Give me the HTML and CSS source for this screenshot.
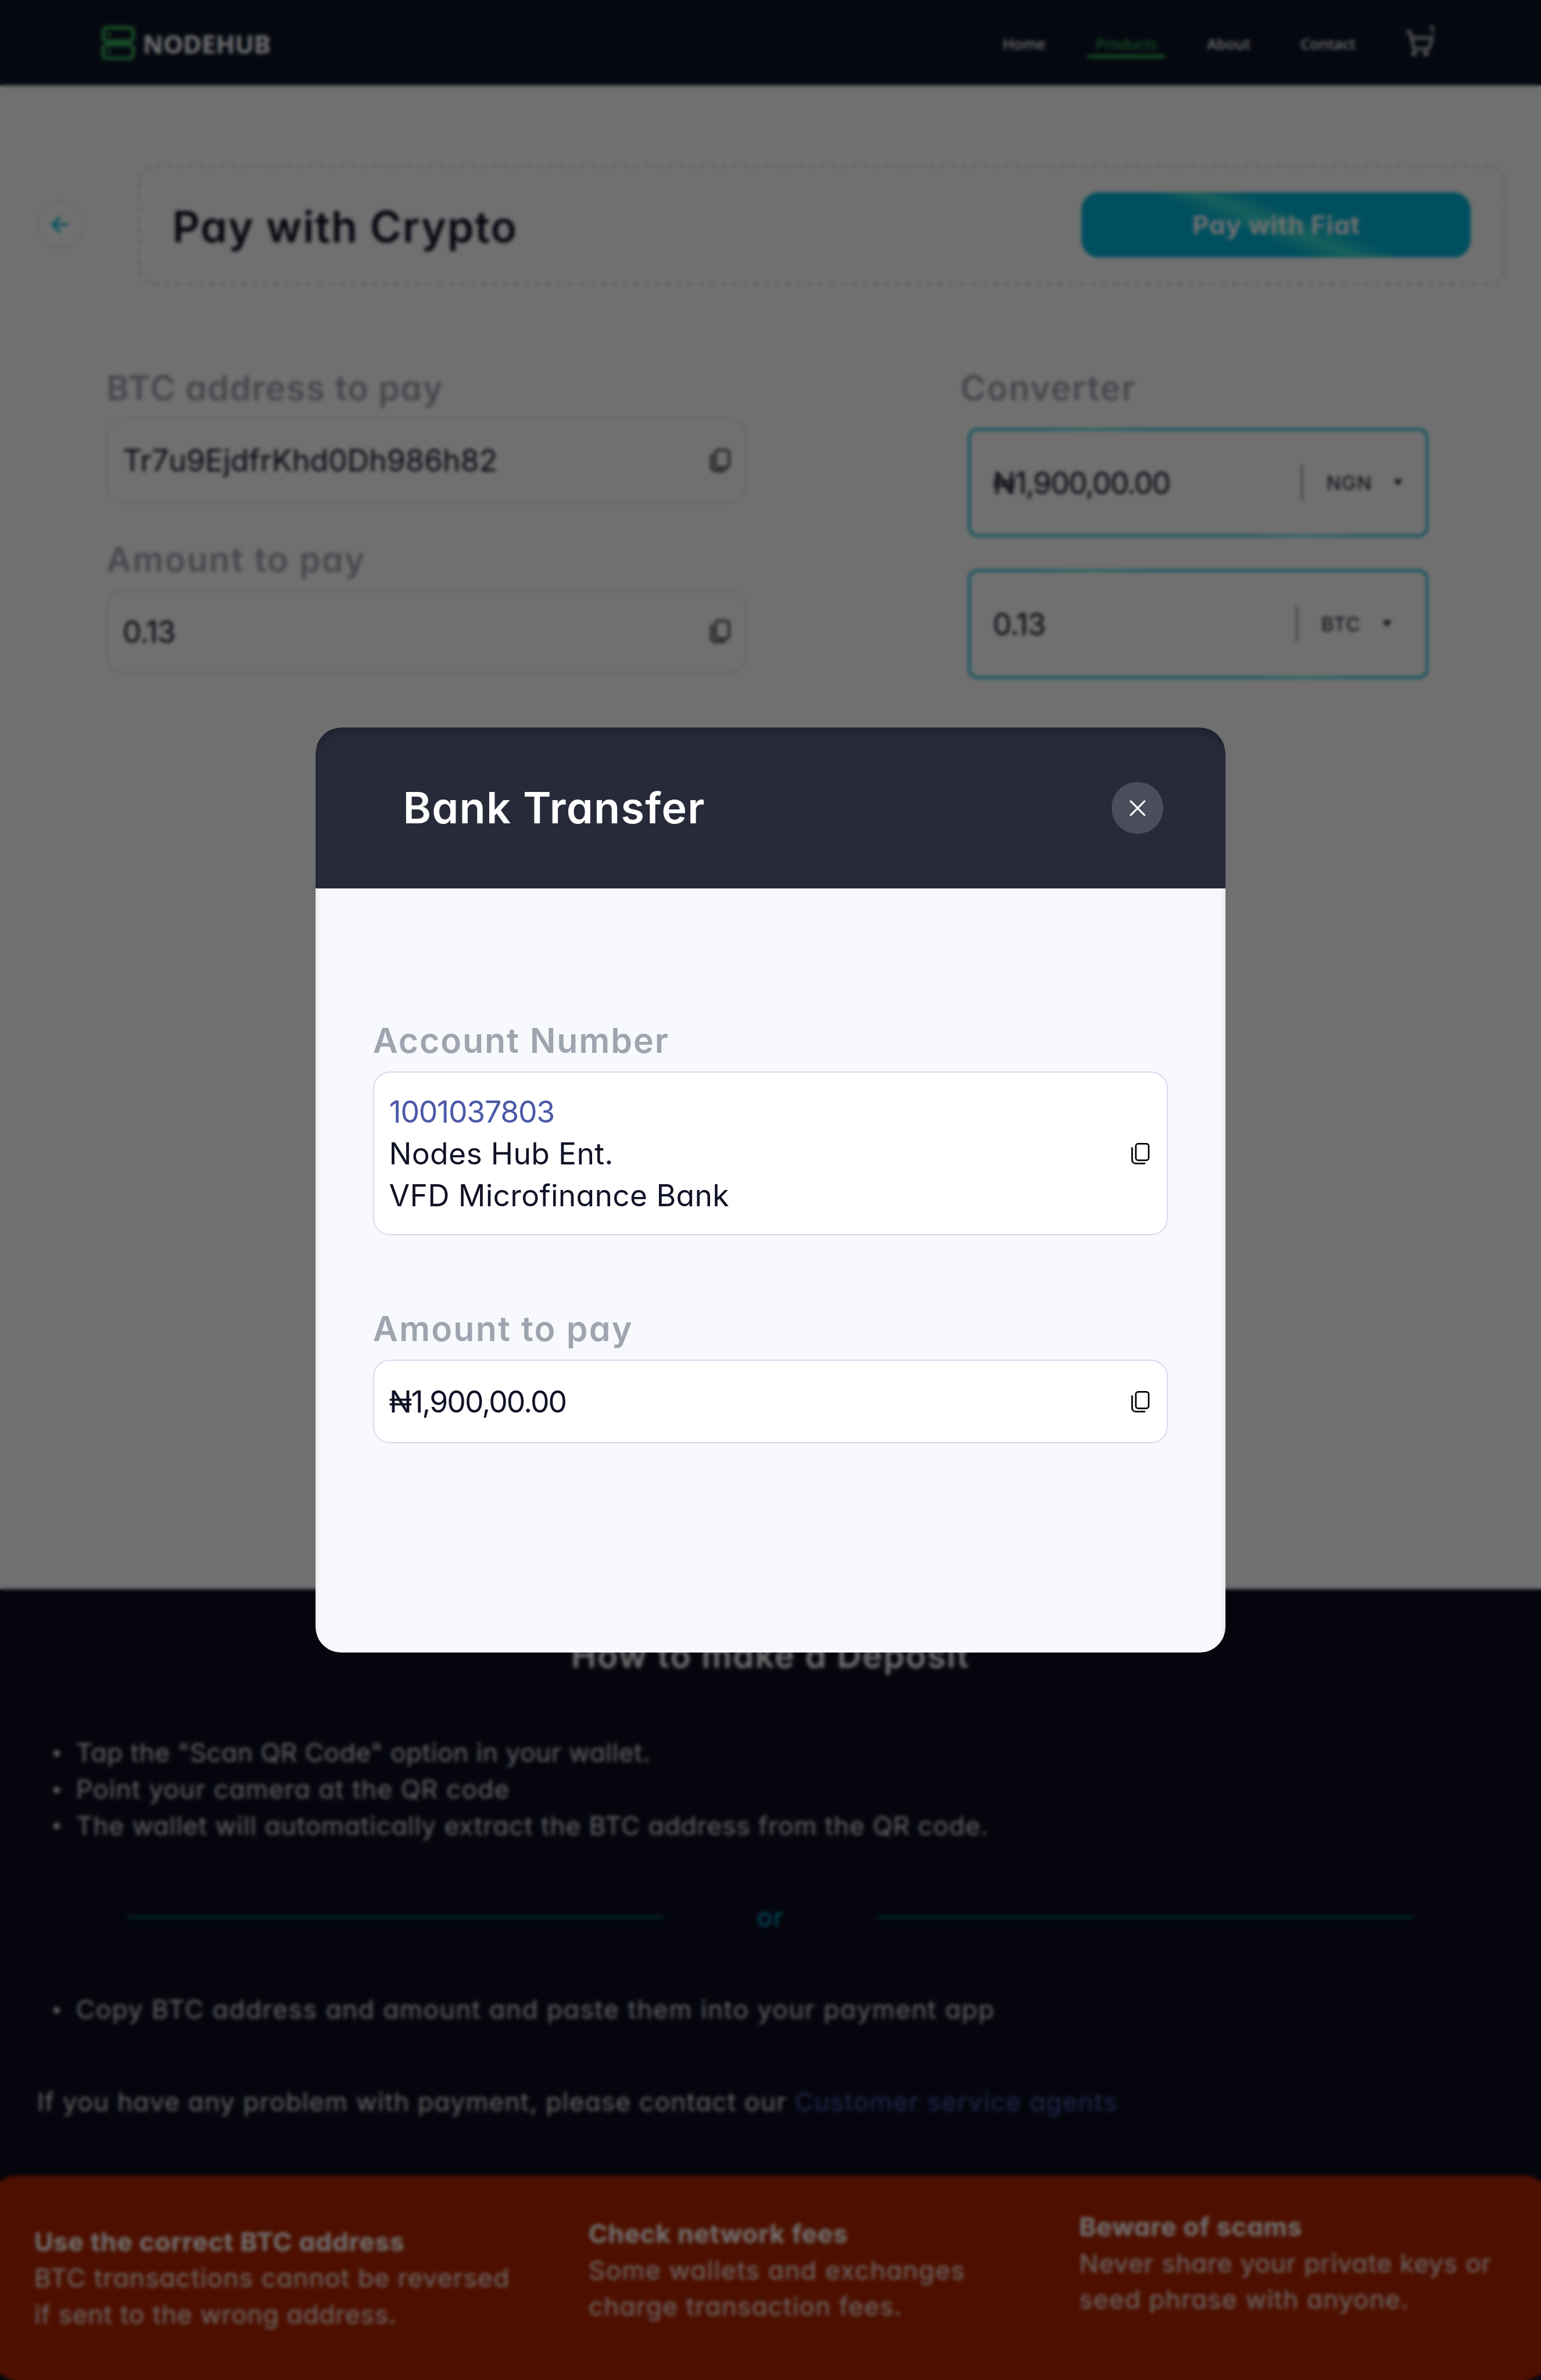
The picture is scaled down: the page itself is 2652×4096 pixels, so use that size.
FILE: index.html
```html
<!DOCTYPE html>
<html lang="en">
<head>
<meta charset="utf-8">
<title>NODEHUB – Pay with Crypto</title>
<link rel="stylesheet" href="styles.css">
</head>
<body>
<svg class="defs" aria-hidden="true">
  <symbol id="copy" viewBox="0 0 36 42">
    <rect x="9.5" y="2.5" width="24" height="31" rx="4.5"/>
    <path d="M2.5 10.5V33a6.5 6.5 0 0 0 6.5 6.5h17"/>
  </symbol>
</svg>

<div class="page">
  <header class="topbar">
    <div class="brand">
      <svg class="brand-icon" viewBox="0 0 64 64"><rect x="4" y="4" width="56" height="25" rx="7"/><rect x="4" y="36" width="56" height="25" rx="7"/><path d="M15 16.500v.1M15 48.500v.1"/></svg>
      <span class="brand-name">NODEHUB</span>
    </div>
    <nav class="nav">
      <a class="nav-link nav-home">Home</a>
      <a class="nav-link nav-active">Products</a>
      <a class="nav-link nav-about">About</a>
      <a class="nav-link nav-contact">Contact</a>
      <div class="cart">
        <svg viewBox="0 0 60 60"><path d="M4 10h5l8 32h28l6-20M12 22h40"/><circle cx="17" cy="51" r="5"/><circle cx="39" cy="51" r="5"/></svg>
        <span class="cart-count">1</span>
      </div>
    </nav>
  </header>

  <main class="content">
    <div class="hero">
      <div class="back"><svg viewBox="0 0 36 36"><path d="M33 18H4M18 4 4 18l14 14"/></svg></div>
      <div class="hero-box">
        <svg class="hero-dash"><rect width="100%" height="100%" rx="28" pathLength="5400"/></svg>
        <h1 class="hero-title">Pay with Crypto</h1>
        <button class="fiat">Pay with Fiat</button>
      </div>
    </div>

    <div class="forms">
      <section class="pay">
        <h2 class="label ls-btc">BTC address to pay</h2>
        <div class="field"><span class="value ls-addr">Tr7u9EjdfrKhd0Dh986h82</span><svg class="copy"><use href="#copy"/></svg></div>
        <h2 class="label second">Amount to pay</h2>
        <div class="field"><span class="value ls-num">0.13</span><svg class="copy"><use href="#copy"/></svg></div>
      </section>
      <section class="converter">
        <h2 class="label conv-label">Converter</h2>
        <div class="conv">
          <span class="value ls-naira">₦1,900,00.00</span>
          <div class="currency"><span class="code">NGN</span><i class="caret"></i></div>
        </div>
        <div class="conv conv-btc">
          <span class="value ls-num">0.13</span>
          <div class="currency"><span class="code">BTC</span><i class="caret"></i></div>
        </div>
      </section>
    </div>
  </main>

  <footer class="guide">
    <h2 class="guide-title">How to make a Deposit</h2>
    <ul class="steps">
      <li class="s1">Tap the "Scan QR Code" option in your wallet.</li>
      <li class="s2">Point your camera at the QR code</li>
      <li class="s3">The wallet will automatically extract the BTC address from the QR code.</li>
    </ul>
    <div class="or"><span>or</span></div>
    <ul class="steps">
      <li class="s4">Copy BTC address and amount and paste them into your payment app</li>
    </ul>
    <p class="help">If you have any problem with payment, please contact our <a>Customer service agents</a></p>
    <div class="warnings">
      <div class="warning w1">
        <h3>Use the correct BTC address</h3>
        <p>BTC transactions cannot be reversed</p>
        <p class="tight">if sent to the wrong address.</p>
      </div>
      <div class="warning w2">
        <h3>Check network fees</h3>
        <p class="loose">Some wallets and exchanges</p>
        <p>charge transaction fees.</p>
      </div>
      <div class="warning w3">
        <h3>Beware of scams</h3>
        <p class="tight">Never share your private keys or</p>
        <p>seed phrase with anyone.</p>
      </div>
    </div>
  </footer>
</div>

<div class="overlay">
  <div class="modal">
    <div class="modal-head">
      <h2 class="modal-title">Bank Transfer</h2>
      <button class="close"><svg viewBox="0 0 30 30"><path d="M2 2l26 26M28 2 2 28"/></svg></button>
    </div>
    <div class="modal-body">
      <h3 class="label">Account Number</h3>
      <div class="field account">
        <div class="value">
          <div class="number">1001037803</div>
          <div>Nodes Hub Ent.</div>
          <div>VFD Microfinance Bank</div>
        </div>
        <svg class="copy"><use href="#copy"/></svg>
      </div>
      <h3 class="label modal-second">Amount to pay</h3>
      <div class="field"><span class="value ls-naira">₦1,900,00.00</span><svg class="copy"><use href="#copy"/></svg></div>
    </div>
  </div>
</div>
</body>
</html>
```
FILE: styles.css
```css
/* 1rem = 100 design pixels */
html { font-size: 92.0833px; }
* { box-sizing: border-box; margin: 0; padding: 0; }
body {
  position: relative;
  width: 28.8rem;
  height: 4096px;
  overflow: hidden;
  font-family: Inter, "Noto Sans", sans-serif;
  font-feature-settings: "cv11";
  color: #0f1225;
  background: #fff;
}
svg { display: block; fill: none; stroke: currentColor; stroke-linecap: round; stroke-linejoin: round; }
.defs { position: absolute; width: 0; height: 0; }
button { border: 0; font: inherit; color: inherit; }
h1, h2, h3 { font-size: inherit; font-weight: inherit; white-space: nowrap; }

/* header */
.topbar {
  display: flex; justify-content: space-between; align-items: center;
  height: 1.6rem; padding: 0 1.94rem 0 1.89rem;
  background: #0d1426; color: #fff;
  font-family: "Noto Sans", sans-serif;
}
.brand { display: flex; align-items: center; gap: .14rem; }
.brand-icon { width: .64rem; height: .64rem; stroke: #35ac59; stroke-width: 7; }
.brand-name { padding-top: .07rem; font-size: .47rem; font-weight: 700; line-height: .64rem; }
.nav { display: flex; align-items: center; }
.nav-link {
  display: flex; align-items: center; justify-content: center;
  height: .56rem; margin-right: .64rem; padding-top: .07rem; margin-top: .02rem;
  border-bottom: .07rem solid transparent;
  font-size: .28rem; font-weight: 500; line-height: .44rem;
}
.nav-home { width: 1.1rem; }
.nav-active { width: 1.44rem; color: #30b052; border-color: #30b052; letter-spacing: -.02em; }
.nav-about { width: 1.11rem; }
.nav-contact { width: 1.32rem; margin-right: .78rem; letter-spacing: -.006em; }
.cart { position: relative; width: .6rem; height: .6rem; margin-top: -.03rem; }
.cart svg { width: .6rem; height: .6rem; stroke-width: 4.8; color: #d6d6da; }
.cart circle { fill: currentColor; stroke: none; }
.cart-count { position: absolute; top: -.07rem; right: .03rem; font-size: .24rem; font-weight: 600; line-height: .28rem; color: #d6d6da; }

/* title bar */
.content { height: 28.1rem; padding-top: 1.47rem; }
.hero { display: flex; align-items: center; gap: 1.02rem; padding: 0 .66rem 0 .68rem; }
.back {
  display: flex; align-items: center; justify-content: center;
  width: .88rem; height: .88rem; border: .02rem solid #c6c6c8; border-radius: 50%;
  color: #00b4d8;
}
.back svg { width: .34rem; height: .36rem; stroke-width: 4.6; }
.hero-box {
  position: relative; flex: 1;
  display: flex; align-items: center; justify-content: space-between;
  height: 2.26rem; padding: 0 .65rem 0 .64rem;
}
.hero-dash { position: absolute; inset: .02rem; width: calc(100% - .04rem); height: calc(100% - .04rem); overflow: visible; }
.hero-dash rect { stroke: #d6d6da; stroke-width: .04rem; stroke-dasharray: 10 10; stroke-linecap: butt; }
.hero-title { padding-top: .08rem; font-size: .8rem; font-weight: 600; letter-spacing: .022em; }
.fiat {
  width: 7.28rem; height: 1.22rem; border-radius: .32rem;
  background: linear-gradient(202deg, #00b4d8 41%, #36dad2 50%, #00b4d8 59%);
  color: #fff; font-size: .48rem; font-weight: 700; letter-spacing: .0176em;
}

/* forms */
.forms { display: flex; justify-content: space-between; padding: 1.45rem 2.11rem 0 1.99rem; }
.label { height: .96rem; color: #9ea5af; font-size: .64rem; font-weight: 600; line-height: .96rem; letter-spacing: .036em; }
.ls-btc { letter-spacing: .022em; }
.second { margin-top: .59rem; }
.pay { width: 11.98rem; }
.field {
  display: flex; align-items: center; justify-content: space-between;
  height: 1.57rem; margin-top: .08rem; padding: 0 .3rem 0 .28rem;
  border: .025rem solid #d6daec; border-radius: .32rem; background: #fff;
}
.value { font-size: .56rem; letter-spacing: .007em; white-space: nowrap; }
.ls-addr { letter-spacing: .0027em; }
.ls-num { letter-spacing: -.018em; }
.ls-naira { letter-spacing: -.0355em; }
.copy { width: .36rem; height: .42rem; color: #000; stroke-width: 3; }
.pay .copy { width: .38rem; height: .45rem; stroke-width: 3.2; }
.converter { width: 8.6rem; }
.conv-label { margin-left: -.14rem; letter-spacing: .032em; }
.conv {
  display: flex; align-items: center; justify-content: space-between;
  height: 2.04rem; margin-top: .26rem; padding: 0 .44rem 0 .42rem;
  border: .048rem solid transparent; border-radius: .18rem;
  background: linear-gradient(#fff, #fff) padding-box,
    linear-gradient(207deg, #00b4d8 41%, #36dad2 50%, #00b4d8 59%) border-box;
}
.conv-btc { margin-top: .6rem; padding-right: .65rem; }
.currency {
  display: flex; align-items: center; height: .68rem; padding-left: .44rem; gap: .41rem;
  border-left: .025rem solid #4b4b52;
}
.code { font-size: .36rem; letter-spacing: .04em; }
.caret { border: .08rem solid transparent; border-top: .12rem solid #0f1225; border-bottom: 0; }

/* deposit guide */
.guide { height: 14.78rem; padding-top: .76rem; background: #0c0d20; color: #fff; overflow: hidden; }
.guide-title { font-size: .63rem; font-weight: 600; line-height: .96rem; text-align: center; letter-spacing: .033em; }
.steps { margin-top: 1rem; padding-left: 1.42rem; list-style: none; font-size: .48rem; line-height: .68rem; color: #dedede; }
.steps li { position: relative; white-space: nowrap; }
.steps li::before {
  content: ""; position: absolute; left: -.42rem; top: .29rem;
  width: .12rem; height: .12rem; border-radius: 50%; background: currentColor;
}
.s1 { letter-spacing: .0123em; }
.s2 { letter-spacing: .0275em; }
.s3 { letter-spacing: .021em; }
.s4 { letter-spacing: .0362em; }
.or { display: flex; align-items: center; margin-top: 1.03rem; padding: 0 2.39rem; color: #00b4d8; font-size: .48rem; line-height: .68rem; letter-spacing: .03em; }
.or::before, .or::after { content: ""; width: 10.01rem; height: .03rem; background: #048099; }
.or span { flex: 1; text-align: center; }
.or + .steps { margin-top: 1.05rem; }
.help { margin-top: 1.04rem; padding-left: .69rem; font-size: .48rem; line-height: .68rem; letter-spacing: .0284em; color: #dedede; white-space: nowrap; }
.help a { color: #4c57a8; letter-spacing: .0305em; }
.warnings {
  display: grid; grid-template-columns: 10.36rem 9.17rem 1fr; align-items: start;
  height: 3.82rem; margin: 1.04rem -.16rem 0; padding-left: .8rem;
  border-radius: .48rem; background: #af2500; color: #fff;
}
.warning { font-size: .48rem; line-height: .68rem; letter-spacing: .0265em; white-space: nowrap; }
.warning h3 { font-weight: 700; letter-spacing: .018em; }
.warning p { opacity: .92; }
.warning .tight { letter-spacing: .0185em; }
.warning .loose { letter-spacing: .0315em; }
.w1 { padding-top: .9rem; }
.w2 { padding-top: .75rem; }
.w3 { padding-top: .62rem; }

/* bank transfer dialog */
.overlay {
  position: absolute; inset: 0;
  display: flex; align-items: center; justify-content: center;
  background: rgba(0, 0, 0, .56);
  -webkit-backdrop-filter: blur(.035rem);
  backdrop-filter: blur(.035rem);
}
.modal { position: relative; width: 17rem; height: 17.28rem; border-radius: .48rem; overflow: hidden; background: #f8f9fd; }
.modal::after { content: ""; position: absolute; inset: 0; border-radius: inherit; box-shadow: inset 0 .13rem .16rem -.05rem rgba(0, 0, 0, .25); pointer-events: none; }
.modal-head {
  display: flex; align-items: center; justify-content: space-between;
  height: 3rem; padding: 0 1.16rem 0 1.63rem; background: #272a39; color: #fff;
}
.modal-title { font-size: .8rem; font-weight: 600; letter-spacing: .018em; }
.close { display: flex; align-items: center; justify-content: center; width: .96rem; height: .96rem; border-radius: 50%; background: #4b4d5a; }
.close svg { width: .3rem; height: .3rem; stroke-width: 3.400; }
.modal-body { padding: 2.37rem 1.07rem 0; }
.modal .label { letter-spacing: .033em; }
.modal .field { height: 1.57rem; margin-top: .09rem; padding-right: .32rem; }
.modal .account { height: 3.07rem; }
.account .value { line-height: .784rem; }
.number { color: #4b58a6; letter-spacing: -.0225em; }
.modal .modal-second { margin-top: 1.27rem; letter-spacing: .038em; }
```
